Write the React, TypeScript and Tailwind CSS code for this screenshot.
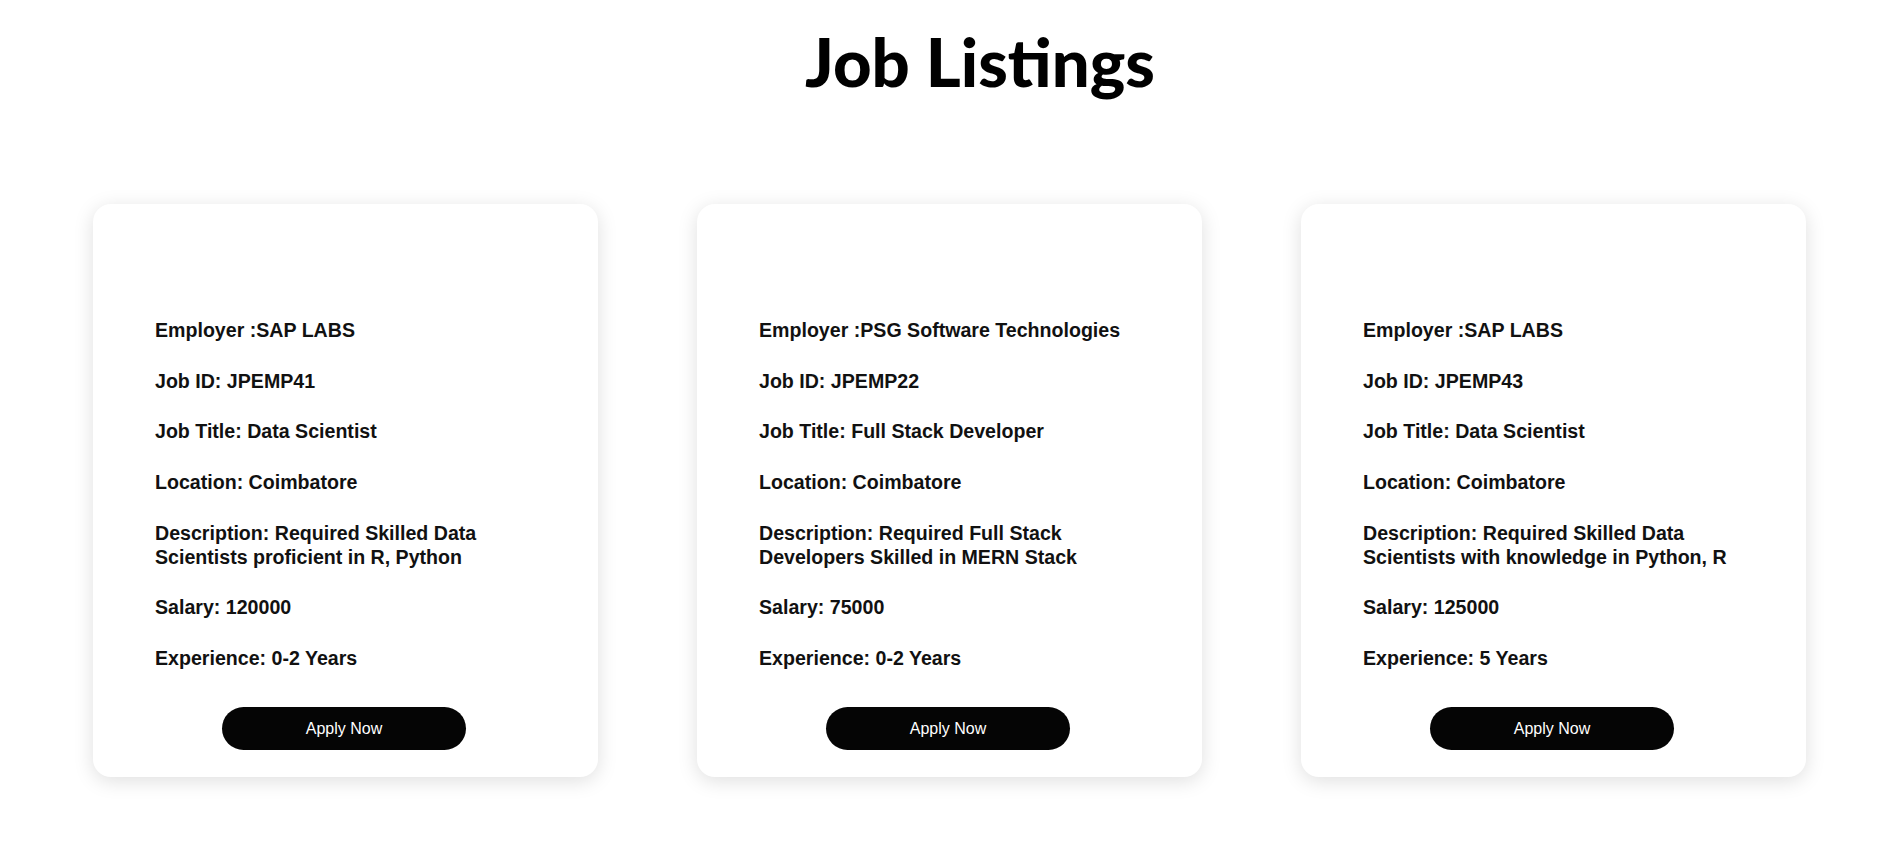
const jobs = [
  {
    employer: "SAP LABS",
    id: "JPEMP41",
    title: "Data Scientist",
    location: "Coimbatore",
    description: "Required Skilled Data Scientists proficient in R, Python",
    salary: "120000",
    experience: "0-2 Years",
  },
  {
    employer: "PSG Software Technologies",
    id: "JPEMP22",
    title: "Full Stack Developer",
    location: "Coimbatore",
    description: "Required Full Stack Developers Skilled in MERN Stack",
    salary: "75000",
    experience: "0-2 Years",
  },
  {
    employer: "SAP LABS",
    id: "JPEMP43",
    title: "Data Scientist",
    location: "Coimbatore",
    description: "Required Skilled Data Scientists with knowledge in Python, R",
    salary: "125000",
    experience: "5 Years",
  },
];

type Job = (typeof jobs)[number];

function JobCard({ job }: { job: Job }) {
  return (
    <div className="flex h-[573px] w-[505px] flex-col rounded-[18px] bg-white pl-[62px] pr-[50px] pb-[27px] pt-[114px] shadow-[0_4px_20px_rgba(0,0,0,0.13)]">
      <div className="flex flex-col gap-[26.7px] text-[19.6px] font-bold leading-[24px] text-[#111]">
        <p>Employer :{job.employer}</p>
        <p>Job ID: {job.id}</p>
        <p>Job Title: {job.title}</p>
        <p>Location: {job.location}</p>
        <p>Description: {job.description}</p>
        <p>Salary: {job.salary}</p>
        <p>Experience: {job.experience}</p>
      </div>
      <button
        type="button"
        className="ml-[67px] mt-auto h-[43px] w-[244px] rounded-full bg-[#050505] text-[16px] text-white"
      >
        Apply Now
      </button>
    </div>
  );
}

export default function App() {
  return (
    <main className="min-h-screen bg-white font-['Liberation_Sans',Arial,sans-serif]">
      <h1 className="h-[204px] pl-[70px] pt-[21px] text-center font-['Comic_Sans_MS','Lato',sans-serif] text-[67px] font-black leading-[80px] text-black">
        Job Listings
      </h1>
      <div className="flex gap-[99px] pl-[93px]">
        {jobs.map((job) => (
          <JobCard key={job.id} job={job} />
        ))}
      </div>
    </main>
  );
}
